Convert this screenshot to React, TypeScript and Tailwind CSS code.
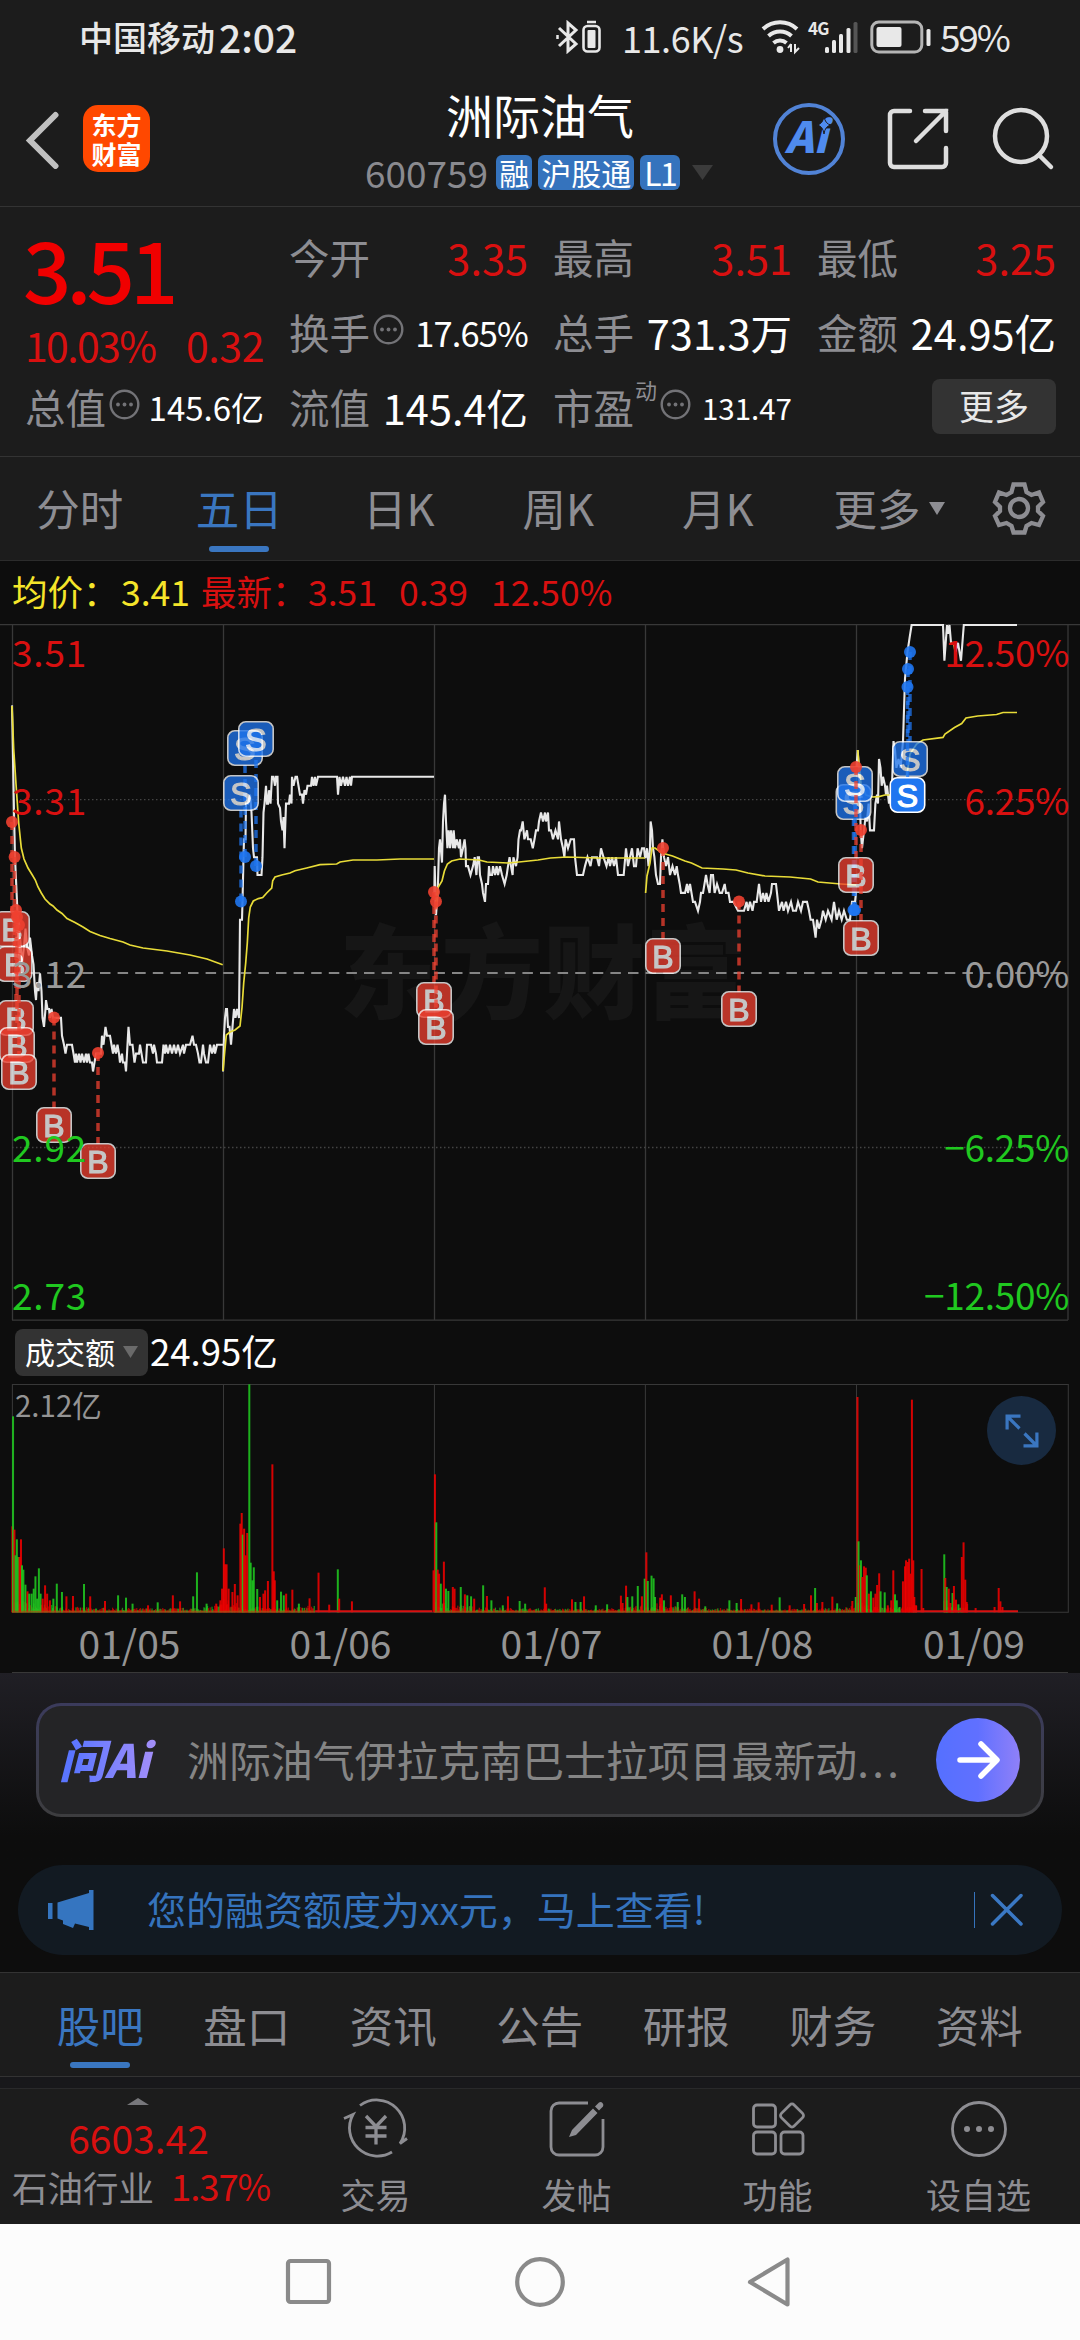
import { useMemo } from "react";
import clsx from "clsx";

const UP = "#f00000";
const DOWN = "#20c820";

// one tick is 0.01, counted down from the top of the scale (3.51)
const TICK = 8.93;

const priceSeries = [
  "12,9 13,15 14,21 15,26 17,31 18,34 19,37 20,35 22,38 24,36 25.5,34 27,36 29,37 30,35 32,37 33.5,38 35,41 36,42 37,40 38.5,41 40,39 41.5,41 42.5,44 44,45 45.5,43 46,42 47.5,43 49,43 50,44 51.5,43 53,44 61,44 62,46 64,47 65.5,48 67,47 72,47 73.5,48 75,49 76,48 77,49 79,48 80.5,49 82,48 84,49 86,48 87,49 88.5,48 90,49 92,49 93,50 94.5,49 96,48 101,48 102,46 103.5,47 105.5,45 107,46 110,46 111.5,47 113,48 114,47 116,48 117.5,47 119,48 120,49 122,48 123,49 125,49 126,50 127,48 128.5,45 130,47 132.5,47 134.5,49 136,48 139,48 140,47 141.5,48 143,49 146,49 147,47 151,47 153,48 154,47 156,48 157,49 162,49 163.5,47 165,48 166,47 168,48 170,47 172,48 174,47 176,48 178,47 180,48 183,47 184,48 186,47 190,47 192.5,46 194,47 196,47 198,48 199.5,49 201,49 203,47 204,48 206,49 208,49 210,47 212,48 214,47 215,48 217,47 223,47",
  "223,50 224,46 225,44 226,43 227,43 228,45 229.5,45 231,47 232.5,45 234,43 235.5,44 237,43 239,44 240,33 242,33 242.5,31 243.5,26 244,24 245.5,24 246,20 248,20 250,19 251.5,21 253,25 254,26 257,26 257.5,28 261.5,28 262.5,26 263.5,21 264.5,20 266,18 267,20 268,20 269,18.5 270.5,20 272,17 273.5,17 275,18 276,17 277.5,17 278,20 280,20.5 281,22 282.5,23 283.5,21.5 284.5,25 286,20 289,20 290,19 291.5,20 292,17 293.5,18 295.5,17 297,17 298.5,18 300,19 302,19 303,20 304.5,18.5 306,19 307.5,18 311,18 312,17 313.5,18 315,17 316,18 318,17 337,17 338,19 339.5,17 341,18 343,17 345,18 346.5,17 348,18 350,17 351,18 352,17 434,17",
  "434.3,30 434.7,27 436,32.5 437.7,30 439,25 440,24 442,26.6 443,22 444,20 445,19 446,22 447.4,25 448.6,23 450,25 451,23 453,25 453.7,23 455,25 456.6,24 459,25 460,24 461,26 463,25 464.6,24 465.5,25 466,27 468,27 470.5,28 473,27 474.7,26 476.4,28 477.7,26 479,26 480,28 482,29 483,30 485,31 486,29 488,29 489,27 490,28 492,28 493,27 495,28 496.6,27 498,28 500,27 502,28 504.6,29 506.7,28 508,27 509.6,26 511,27 512.6,28 513.4,26 516,27 517.6,26 518.5,24 520,23 521,23 522.7,22 524.4,24 527,23 528,24 530.7,24 532.8,25 534.5,24 536,23 538,23 539,22 541,21 543,22 545,21 546,22 548,21 549,23 551,23 553,24 555.5,23 558,24 559,22 561,24 563,25 564.4,26 565.6,24 568,25 570.7,24 574,24 575,26 577,28 583,28 585,27 587.5,26 590.5,27 592,26 597,26 599,27 601,25 603.5,26 606.5,27 608.6,26 610,27 612,26 614,27 616,26 618,28 623.7,28 626,25 628,27 630,26 632,25 634,27 636,27 637.6,25 640,26 642,25 644,25 645,26 645.6,26 647,25 648.5,27 650,25 650.6,22 652,23 653,25 654.4,26 656,28 658,29 660,29 661,26 662.4,24 664,26 666,27 668,26 670,28 672.5,27 675,28 676.7,27 678,28 679.7,29 681,30 685,30 687,29 688,30 690,29 691.5,30 693,31 695,31 698,32 700,31 701,30 703,30 704.5,29 706,28 707.5,29 709.6,30 711,28 713,28 714.6,30 717,29 719.7,30 722,30 724.7,29 726,30 728.5,30 730,31 733.6,31 735.7,31.5 738,32 744,32 746.6,31 748,32 750,31 752.5,32 754,31 756.7,31 759,29 761,31 763,30 765,31 766.4,30 768.5,31 771,30 772,29 776,29 777,30 779,32 782,31 783.6,32 786,31 788,32 791,31 793,32 796,32 798,31 801,32 803,31 807,31 809,32 810.6,33 813,33 815.6,35 817,33 819,34 821.5,33 823,32 825.7,33 828,32 831.6,33 834,31 836.7,33 839,32 841.7,33 844,32 846.8,33 850,33 852,31 855,31 856,30",
  "856.5,16 857.7,14 859.4,17 860.7,23 862,25 864,23 865.5,21.5 867,22 868.6,20 870,23 874,23 875.4,20 877,19 878,20 879,15 880.5,16 881.7,18 883,17 885,18 886,19 887,18 889,20 890,19 891.4,20 893.5,13 895,14 896.4,16 898.5,15 900.6,16 903,13 905,6 907.5,3 909.5,1.5 911.6,0 943,0 944.4,4 945.7,2 947,0 948,1 949.5,0 951,2 953.7,2 955.4,3 958,2 961,4 963.8,0 1017,0",
];

const averageSeries = [
  "12,81 13.7,124 16,159 18.7,198 21.3,223 24,234 28,243 32.3,250 35.3,255 38,262 41.3,268 45,274 50,279 53,281 57,285 62,288.5 67,293.5 75,297.5 83,302 90,306.5 100,310.5 110,313.5 123,317 130,320 143,323 167,326 190,330 207,334 222.7,339.7",
  "223,446 224.7,427 226.3,410 230,407 235,405 240,401 242,382.5 243.7,358 245.7,338 247.3,318 248.7,293 250.3,282 253.3,276 258.3,273.6 262.7,272.6 266.7,268 271.7,263 272.7,255.7 275,252 281.7,250 290,248 295,245.7 306.7,243 320,239.7 336.7,239 340,237 353,235 377,235 400,234 434,234",
  "436,283 437.7,263 442,256 444.4,246 447.4,239 451.6,236 460,234 479,235 487,237 508,238 519,237 538,235 550.5,233 567,232 597,233 645,233",
  "645.6,268 647,251 650,238 652,223 655,223 662,228 672.5,231 685,236 691.5,238 702,243 723,244 736,245 748,248 765,251 790,252 810.6,254 818,257 841,259 856,260",
  "857.7,125 859,139 861,159 866,170 872.5,172 879,171.6 885,170 891,170 903,164 907,149 910,129 916.6,119 923,115 943,112.4 945,109 954.5,102.5 961.7,98.5 966,93 977.7,91 996.6,89.5 1003,87.5 1017,87.5",
];

type Trade = {
  side: "B" | "S";
  x: number;
  dot: number;
  badge: number;
  merged?: boolean;
  active?: boolean;
};

const trades: Trade[] = [
  { side: "B", x: 12, dot: 197, badge: 304 },
  { side: "B", x: 14.6, dot: 232, badge: 339 },
  { side: "B", x: 16, dot: 285, badge: 393 },
  { side: "B", x: 17, dot: 292, badge: 420 },
  { side: "B", x: 19, dot: 300, badge: 447 },
  { side: "B", x: 54, dot: 392.5, badge: 500 },
  { side: "B", x: 98, dot: 428, badge: 536 },
  { side: "S", x: 245, dot: 232, badge: 123 },
  { side: "S", x: 256, dot: 241, badge: 114 },
  { side: "S", x: 241, dot: 276.5, badge: 168 },
  { side: "B", x: 434, dot: 267, badge: 375 },
  { side: "B", x: 436, dot: 276.5, badge: 402 },
  { side: "B", x: 663, dot: 223, badge: 331 },
  { side: "B", x: 739, dot: 276.5, badge: 384 },
  { side: "S", x: 853.5, dot: 285, badge: 177 },
  { side: "S", x: 855, dot: 285, badge: 159 },
  { side: "B", x: 856, dot: 142, badge: 250 },
  { side: "B", x: 861, dot: 205, badge: 313 },
  { side: "S", x: 908, dot: 44, badge: 134, merged: true },
  { side: "S", x: 910, dot: 27, badge: 134 },
  { side: "S", x: 907.5, dot: 62, badge: 170, active: true },
];

// x, height, r = bought / g = sold
const volumes =
  "36,258,r 38,588,g 42,248,r 45,171,g 49,219,g 53,166,g 57,166,r 61,219,r 64,141,g 68,128,g 74,83,g 80,63,r 85,56,g 92,56,g 98,71,g 103,108,g 108,41,g 113,132,g 118,56,g 124,41,r 131,81,r 137,56,r 145,36,r 155,41,g 165,86,g 180,61,g 193,48,r 212,49,r 244,85,g 262,48,r 305,34,r 343,51,g 366,44,g 385,26,g 430,21,r 458,30,g 502,51,r 523,33,r 561,48,g 572,120,g 600,26,g 628,26,r 640,36,r " +
  "645,71,r 650,192,r 654,144,r 658,144,r 664,71,r 675,61,r 682,85,r 690,51,r 698,266,r 702,298,r 705,233,g 709,251,r 713,171,r 718,238,r 724,684,g 728,149,g 733,96,g 737,135,g 747,70,g 755,46,r 765,56,r 770,66,r 778,94,r 791,444,r 795,123,r 798,96,r 805,36,g 816,62,g 824,51,g 831,56,r 849,68,r 868,26,g 899,42,r 925,119,r 956,23,r 981,129,g 985,41,r 1022,33,r " +
  "1259,126,r 1263,414,r 1267,270,g 1271,128,r 1275,116,r 1280,86,g 1289,152,r 1295,71,g 1302,64,g 1315,76,r 1320,71,r 1338,76,g 1350,54,r 1357,51,g 1368,48,g 1377,41,r 1403,81,g 1414,49,r 1427,36,g 1460,21,g 1475,48,r 1509,34,g 1525,26,g 1582,75,r 1586,26,r 1661,39,r 1671,31,g 1686,31,g 1696,48,r 1730,21,g 1763,24,g 1803,50,r 1808,28,r 1818,80,r 1822,46,g 1836,48,g 1852,79,g 1864,48,r " +
  "1872,101,g 1877,180,r 1881,94,g 1892,110,g 1898,102,g 1902,46,g 1917,44,r 1922,54,r 1928,36,g 1948,51,r 1968,31,g 1981,54,g 1989,46,g 2017,63,r 2030,41,r 2048,18,g 2118,36,g 2139,28,g 2152,40,r 2182,24,r 2203,30,r 2241,23,r 2264,45,g 2293,21,r 2335,25,r 2355,51,r 2367,73,g 2372,28,r 2388,31,r 2417,47,r 2431,27,g 2475,34,r " +
  "2485,46,g 2490,646,r 2493,213,g 2497,141,r 2500,156,g 2504,106,r 2509,138,r 2514,134,r 2517,111,g 2523,56,r 2529,63,g 2536,44,r 2542,56,r 2547,82,r 2553,117,r 2557,63,g 2569,60,g 2578,21,r 2588,36,r 2594,126,r 2599,54,g 2604,36,g 2612,16,g 2622,93,r 2628,138,r 2631,156,r 2636,151,r 2640,161,r 2644,116,r 2648,638,r 2652,156,r 2655,46,r 2660,21,r 2676,130,r 2681,13,r 2742,174,g 2745,103,r 2749,76,g 2755,71,r 2760,28,r 2766,58,g 2770,79,r 2776,38,r 2783,24,g 2793,166,r 2798,210,r 2803,98,r 2807,31,r 2833,13,r 2888,16,r 2900,73,r 2905,33,r 2911,16,r";

const toPoints = (series: string, scale: number) =>
  series
    .split(" ")
    .map((pair) => {
      const [x, y] = pair.split(",").map(Number);
      return `${x},${y * scale}`;
    })
    .join(" ");

// quiet minutes between the large orders
function minorVolumes() {
  const ranges = [
    [36, 646, 22],
    [650, 915, 26],
    [1262, 1870, 18],
    [1874, 2484, 16],
    [2490, 2662, 26],
    [2742, 2812, 30],
  ];
  const bars: { x: number; h: number; up: boolean }[] = [];
  let seed = 7;
  const next = () => {
    seed = (seed * 16807) % 2147483647;
    return seed / 2147483647;
  };
  for (const [from, to, peak] of ranges) {
    for (let x = from; x < to; x += 2.6) {
      const p = (x - from) / (to - from);
      const envelope = 0.35 + 1.6 * Math.exp(-p * 7) + 0.8 * Math.exp(-(1 - p) * 14);
      bars.push({ x, h: 5 + peak * envelope * next() ** 1.6, up: next() > 0.4 });
    }
  }
  return bars;
}

function MoreInfo() {
  return (
    <svg className="mb-[6px] ml-[3px] h-[31px] w-[31px] shrink-0" viewBox="0 0 31 31" fill="none">
      <circle cx="15.5" cy="15.5" r="13.8" stroke="#737377" strokeWidth="2.4" />
      <circle cx="9" cy="15.5" r="1.9" fill="#737377" />
      <circle cx="15.5" cy="15.5" r="1.9" fill="#737377" />
      <circle cx="22" cy="15.5" r="1.9" fill="#737377" />
    </svg>
  );
}

function StatusBar() {
  return (
    <div className="flex h-[75px] items-center pb-[2px] pl-[79px] text-[#e8e8e8]">
      <span className="w-[140px] text-[34px] font-medium leading-none">中国移动</span>
      <span className="w-[337px] text-[39px] font-medium leading-none">2:02</span>
      <svg className="h-[34px] w-[46px]" viewBox="0 0 46 34" fill="none" stroke="#e8e8e8" strokeWidth="3">
        <path d="M3 8l17 16-8 7V3l8 7L3 26" />
        <path d="M1.500 15v4" strokeWidth="2.500" />
        <rect x="27.500" y="6" width="16" height="25.500" rx="4" strokeWidth="2.600" />
        <rect x="31.500" y="10" width="8" height="18" rx="1" fill="#e8e8e8" stroke="none" />
        <path d="M31 2h9" strokeWidth="2.500" />
      </svg>
      <span className="ml-[20px] w-[139px] text-[36px] leading-none tracking-[-0.012em]">11.6K/s</span>
      <svg className="h-[36px] w-[40px]" viewBox="0 0 40 36" fill="none" stroke="#e8e8e8" strokeWidth="4">
        <path d="M2 10a25 25 0 0 1 34 0M7.500 17a17 17 0 0 1 23 0M12.500 24a10 10 0 0 1 13 0" />
        <circle cx="19" cy="30.500" r="3.400" fill="#e8e8e8" stroke="none" />
        <path d="M30 25v8M27 29l3-4M34 25v8l4-4" strokeWidth="2" />
      </svg>
      <span className="mb-[18px] ml-[7px] w-[16px] text-[17px] font-bold leading-none tracking-tighter">4G</span>
      <svg className="h-[32px] w-[34px]" viewBox="0 0 34 32" fill="#e8e8e8">
        <rect x="1" y="26" width="4" height="6" rx="1.500" />
        <rect x="8" y="19" width="4" height="13" rx="1.500" />
        <rect x="15" y="13" width="4" height="19" rx="1.500" />
        <rect x="22.500" y="7" width="4" height="25" rx="1.500" />
        <rect x="29.500" y="1" width="4" height="31" rx="1.500" fill="#555" />
      </svg>
      <svg className="ml-[12px] h-[34px] w-[62px]" viewBox="0 0 62 34" fill="none">
        <rect x="1.800" y="2" width="50" height="30" rx="7" stroke="#b5b5b5" strokeWidth="3" />
        <rect x="6.500" y="7" width="25" height="20" rx="2" fill="#e8e8e8" />
        <rect x="56.500" y="9" width="4" height="17" rx="1.500" fill="#e8e8e8" />
      </svg>
      <span className="ml-[8px] text-[37px] leading-none tracking-[-0.06em]">59%</span>
    </div>
  );
}

function Header() {
  return (
    <header className="flex h-[132px] items-start border-b border-[#333] pt-[9px]">
      <div className="flex w-[339px] items-center pl-[25px] pt-[21px]">
        <svg className="h-[60px] w-[36px]" viewBox="0 0 36 60" fill="none" stroke="#c0c0c0" strokeWidth="6" strokeLinecap="round">
          <path d="M30.500 6L5 31.500L30.500 57" />
        </svg>
        <div className="ml-[22px] flex h-[67px] w-[67px] flex-col items-center justify-center rounded-[15px] bg-[#ff4800] text-[25px] font-bold leading-[29px] text-white">
          <span>东方</span>
          <span>财富</span>
        </div>
      </div>
      <div className="flex w-[400px] flex-col items-center">
        <h1 className="pb-[17px] pl-[2px] pt-[6px] text-[47px] leading-none text-white">洲际油气</h1>
        <div className="flex items-center gap-[6px] text-[30px] leading-none text-white">
          <span className="mr-[2px] text-[37px] text-[#8a8a8f]">600759</span>
          <span className="flex h-[35px] items-center rounded-[6px] bg-[#3573bd] px-[3px] pb-[2px]">融</span>
          <span className="flex h-[35px] items-center rounded-[6px] bg-[#3573bd] px-[3px] pb-[2px]">沪股通</span>
          <span className="flex h-[35px] items-center rounded-[6px] bg-[#3573bd] px-[4px] pb-[2px] text-[32px] tracking-[-0.05em]">L1</span>
          <svg className="ml-[6px] h-[15px] w-[21px]" viewBox="0 0 21 15" fill="#3b3b3b">
            <path d="M0 0h21L10.500 15z" />
          </svg>
        </div>
      </div>
      <div className="flex items-center pl-[32px] pt-[17px]">
        <svg className="h-[76px] w-[76px]" viewBox="0 0 76 76" fill="none">
          <circle cx="38" cy="38" r="34" stroke="#5183d6" strokeWidth="4" />
          <text x="14" y="52" fontSize="43" fontWeight="900" fontStyle="italic" fill="#4f8bee">Ai</text>
          <path d="M53 15q1 8 7 9q-6 1-7 9q-1-8-7-9q6-1 7-9z" fill="#4f8bee" stroke="#1c1c1c" strokeWidth="1" />
        </svg>
        <svg className="ml-[39px] h-[64px] w-[64px]" viewBox="0 0 64 64" fill="none" stroke="#dedede" strokeWidth="4.500" strokeLinecap="round">
          <path d="M24 4H8a4 4 0 0 0-4 4v48a4 4 0 0 0 4 4h48a4 4 0 0 0 4-4V41M39 4h21v20M60 4L30 34" />
        </svg>
        <svg className="ml-[41px] h-[66px] w-[66px]" viewBox="0 0 66 66" fill="none" stroke="#dedede" strokeWidth="4.500" strokeLinecap="round">
          <circle cx="30" cy="30" r="26" />
          <path d="M48 49L60 61" />
        </svg>
      </div>
    </header>
  );
}

function QuoteItem({ label, value, info, sup, tone, size }: {
  label: string;
  value: string;
  info?: boolean;
  sup?: string;
  tone?: string;
  size?: string;
}) {
  return (
    <div className="flex h-[75px] items-center">
      <span className="text-[40.500px] leading-none text-[#8d8d92]">{label}</span>
      {sup && <span className="mb-[38px] ml-[1px] text-[22px] leading-none text-[#8d8d92]">{sup}</span>}
      {info && <MoreInfo />}
      <span className={clsx("ml-auto whitespace-nowrap leading-none", tone ?? "text-white", size ?? "text-[41.500px]")}>
        {value}
      </span>
    </div>
  );
}

function Quote() {
  return (
    <section className="grid h-[250px] grid-cols-[239px_239px_239px_239px] gap-x-[25px] border-b border-[#333] pl-[25px] pt-[13px]">
      <div>
        <div className="-ml-[2px] flex h-[96px] items-center pb-[4px] text-[85px] font-medium leading-none tracking-[-0.06em] text-[#f00000]">
          3.51
        </div>
        <div className="flex h-[54px] items-center justify-between pt-[2px] text-[41px] leading-none text-[#d81010]">
          <span className="tracking-[-0.04em]">10.03%</span>
          <span className="tracking-[-0.01em]">0.32</span>
        </div>
        <QuoteItem label="总值" value="145.6亿" info size="text-[33px]" />
      </div>
      <div>
        <QuoteItem label="今开" value="3.35" tone="text-[#d81010]" />
        <QuoteItem label="换手" value="17.65%" info size="text-[34.500px] tracking-[-0.025em]" />
        <QuoteItem label="流值" value="145.4亿" />
      </div>
      <div>
        <QuoteItem label="最高" value="3.51" tone="text-[#d81010]" />
        <QuoteItem label="总手" value="731.3万" />
        <QuoteItem label="市盈" value="131.47" sup="动" info size="text-[29.500px]" />
      </div>
      <div>
        <QuoteItem label="最低" value="3.25" tone="text-[#d81010]" />
        <QuoteItem label="金额" value="24.95亿" />
        <div className="flex h-[72px] items-center justify-end">
          <button type="button" className="h-[55px] w-[124px] rounded-[8px] bg-[#333] pb-[4px] text-[35px] leading-none text-[#e8e8e8]">
            更多
          </button>
        </div>
      </div>
    </section>
  );
}

function PeriodTabs() {
  const periods = ["分时", "五日", "日K", "周K", "月K"];
  return (
    <nav className="flex h-[104px] border-b border-[#2c2c2c] text-[43.500px] leading-none text-[#8d8d92]">
      {periods.map((period) => (
        <div key={period} className={clsx("flex w-[159.500px] flex-col items-center pt-[29px]", period === "五日" && "text-[#3a76c0]")}>
          <span>{period}</span>
          {period === "五日" && <span className="mt-[16px] h-[6px] w-[60px] rounded-full bg-[#3a76c0]" />}
        </div>
      ))}
      <div className="flex items-start pl-[36px] pt-[29px]">
        更多
        <svg className="ml-[8px] mt-[16px] h-[13px] w-[16px]" viewBox="0 0 16 13" fill="#8d8d92">
          <path d="M0 0h16L8 13z" />
        </svg>
      </div>
      <svg className="ml-[47px] mt-[24px] h-[54px] w-[54px]" viewBox="0 0 54 54" fill="none" stroke="#8d8d92" strokeWidth="4.300">
        <path d="M21.500 3.500h11l2 7.500 5 3 7.500-2.500 4 9.500-5 5v4l5 5-4 9-7.500-2-5 3-2 6.500h-11l-2-6.500-5-3-7.500 2-4-9 5-5v-4l-5-5 4-9.500 7.500 2.500 5-3z" />
        <circle cx="27" cy="27" r="9" />
      </svg>
    </nav>
  );
}

function TradeMark({ side, x, dot, badge, merged, active }: Trade) {
  const color = side === "B" ? "#ee4030" : "#1f76f0";
  return (
    <g>
      <path d={`M${x} ${dot}V${badge > dot ? badge - 17 : badge + 17}`} stroke={color} strokeOpacity=".75" strokeWidth="3.500" strokeDasharray="8 6" />
      <circle cx={x} cy={dot} r="6" fill={color} fillOpacity=".9" />
      {!merged && (
        <g opacity={active ? 1 : 0.76}>
          <rect x={x - 17.2} y={badge - 17.2} width="34.400" height="34.400" rx="7" fill={color} stroke="#fff" strokeWidth="1.600" />
          <text x={x} y={badge + 11.5} textAnchor="middle" fontSize="32" stroke="#fff" strokeWidth="1.200" fill="#fff" className="font-['Liberation_Sans',sans-serif]">
            {side}
          </text>
        </g>
      )}
    </g>
  );
}

function PriceChart() {
  const dayLines = [12.5, 223.5, 434.5, 645.5, 856.5, 1068];
  const leftLabels = [
    { y: 42, text: "3.51", fill: "#d81010" },
    { y: 190, text: "3.31", fill: "#d81010" },
    { y: 363, text: "3.12", fill: "#9a9a9a" },
    { y: 537, text: "2.92", fill: DOWN },
    { y: 685, text: "2.73", fill: DOWN },
  ];
  const rightLabels = ["12.50%", "6.25%", "0.00%", "−6.25%", "−12.50%"];

  return (
    <svg className="block h-[697px] w-[1080px] overflow-visible" viewBox="0 -1 1080 697" fill="none">
      <text x="543" y="386" textAnchor="middle" fontSize="102" fontWeight="900" fill="#161616">东方财富</text>
      <g stroke="#383838" strokeWidth="1.300">
        <path d="M0 -.4H1080M12 695.200H1068" />
        {dayLines.map((x) => (
          <path key={x} d={`M${x} 0V695`} />
        ))}
        <path d="M12 174.700H1068M12 522.500H1068" strokeDasharray="1.500 2.500" stroke="#444" />
      </g>
      <path d="M12 348H1062" stroke="#858585" strokeWidth="1.800" strokeDasharray="10.500 7.100" />
      {priceSeries.map((series) => (
        <polyline key={series} points={toPoints(series, TICK)} stroke="#e8e8e8" strokeWidth="2.100" />
      ))}
      {averageSeries.map((series) => (
        <polyline key={series} points={toPoints(series, 1)} stroke="#e8dc38" strokeWidth="1.700" />
      ))}
      {trades.map((trade, i) => (
        <TradeMark key={i} {...trade} />
      ))}
      <g fontSize="37">
        {leftLabels.map((label, i) => (
          <g key={label.text} fill={label.fill}>
            <text x="12" y={label.y} letterSpacing=".8">{label.text}</text>
            <text x="1069" y={label.y} textAnchor="end" letterSpacing="-.3">{rightLabels[i]}</text>
          </g>
        ))}
      </g>
    </svg>
  );
}

function VolumeChart() {
  const minor = useMemo(minorVolumes, []);
  const days = ["01/05", "01/06", "01/07", "01/08", "01/09"];

  return (
    <section className="relative">
      <div className="flex h-[63px] items-center pl-[15px] text-white">
        <div className="flex h-[47px] w-[133px] items-center rounded-[8px] bg-[#333] pb-[3px] pl-[10px] text-[30px] leading-none">
          成交额
          <svg className="ml-[8px] mt-[2px] h-[12px] w-[15px]" viewBox="0 0 15 12" fill="#6a6a6a">
            <path d="M0 0h15L7.500 12z" />
          </svg>
        </div>
        <span className="ml-[2px] pb-[3px] text-[36.500px] leading-none">24.95亿</span>
      </div>
      <svg className="block h-[229px] w-[1080px]" viewBox="0 0 3136 687" preserveAspectRatio="none">
        <g stroke="#383838" strokeWidth="3">
          <path d="M36 1.500H3102M36 684.500H3102" />
          {[36, 649, 1261.5, 1874, 2487, 3102].map((x) => (
            <path key={x} d={`M${x} 0V686`} />
          ))}
        </g>
        {minor.map((bar, i) => (
          <rect key={i} x={bar.x - 2} y={685 - bar.h} width="3.600" height={bar.h} fill={bar.up ? UP : DOWN} opacity=".7" />
        ))}
        {volumes.split(" ").map((item) => {
          const [x, h, side] = item.split(",");
          return (
            <rect key={x} x={Number(x) - 3} y={685 - Number(h)} width="5.800" height={h} fill={side === "r" ? UP : DOWN} opacity=".88" />
          );
        })}
        <path d="M36 683H915M1262 683H2490" stroke="#a85010" strokeWidth="5" opacity=".7" />
        <path d="M915 682H1255M2650 682H2956" stroke="#d81010" strokeWidth="6" />
      </svg>
      <div className="mx-[12px] grid h-[60px] grid-cols-[211px_211px_211px_211px_212px] items-center border-b border-[#383838] text-center text-[39px] leading-none text-[#949494]">
        {days.map((day) => (
          <span key={day} className="pb-[1px] pl-[24px]">{day}</span>
        ))}
      </div>
      <span className="absolute left-[15px] top-[69px] text-[29.500px] leading-none text-[#949494]">2.12亿</span>
      <button type="button" className="absolute left-[987px] top-[75px] flex h-[69px] w-[69px] items-center justify-center rounded-full bg-[#182a40]">
        <svg className="h-[34px] w-[34px]" viewBox="0 0 34 34" fill="none" stroke="#3a76c0" strokeWidth="3.200">
          <path d="M15.500 2.100H2.100V15.500M2.500 2.500L14.500 14.500M18.500 31.900H31.900V18.500M31.500 31.500L19.500 19.500" />
        </svg>
      </button>
    </section>
  );
}

function AskAi() {
  return (
    <section className="h-[192px] bg-linear-to-b from-[#201f25] to-[#0d0d0d] to-85% px-[36px] pt-[30px]">
      <div className="h-[114px] rounded-[25px] bg-linear-to-b from-[#3b3b5c] to-[#3d3d3f] p-[3px]">
        <div className="flex h-[108px] items-center rounded-[22px] bg-[#242426] pl-[20px]">
          <span className="w-[128px] bg-linear-to-r from-[#5a75ff] from-10% to-[#a890f8] to-80% bg-clip-text pb-[5px] text-[46px] font-black italic leading-[60px] text-transparent">
            问Ai
          </span>
          <span className="w-[721px] whitespace-nowrap pb-[3px] text-[41.900px] leading-none text-[#858585]">
            洲际油气伊拉克南巴士拉项目最新动<span className="tracking-[0.08em]">...</span>
          </span>
          <div className="ml-[28px] flex h-[84px] w-[84px] items-center justify-center rounded-full bg-linear-to-r from-[#5570ff] via-[#6070ff] to-[#8f80f8]">
            <svg className="h-[42px] w-[44px]" viewBox="0 0 44 42" fill="none" stroke="#fff" strokeWidth="5.500" strokeLinecap="round" strokeLinejoin="round">
              <path d="M4 21h35M25 5l16 16-16 16" />
            </svg>
          </div>
        </div>
      </div>
    </section>
  );
}

function Notice() {
  return (
    <div className="h-[107px] bg-[#0d0d0d] px-[18px]">
      <div className="flex h-[90px] items-center rounded-full bg-[#121a22] pl-[30px] text-[#3573bd]">
        <svg className="h-[40px] w-[46px]" viewBox="0 0 46 40" fill="#3575c0">
          <path d="M0 13h4.500v16H0zM9.500 12.500L41 3V0h4.500v40H41v-3L27 33.500 25 38l-10-4v-3.500l-5.500-2z" />
        </svg>
        <span className="ml-[53px] pb-[4px] text-[39px] leading-none">您的融资额度为xx元，马上查看!</span>
        <div className="ml-auto h-[36px] w-[1.500px] bg-[#3573bd]" />
        <svg className="ml-[15px] mr-[38px] h-[34px] w-[34px]" viewBox="0 0 34 34" stroke="#3a78c4" strokeWidth="3.500" strokeLinecap="round">
          <path d="M2.500 2.500L31 31M31 2.500L2.500 31" />
        </svg>
      </div>
    </div>
  );
}

function SectionTabs() {
  const tabs = ["股吧", "盘口", "资讯", "公告", "研报", "财务", "资料"];
  return (
    <nav className="flex h-[105px] border-y border-[#333] bg-[#1c1c1c] pl-[27px] text-[43.500px] leading-none text-[#8d8d92]">
      {tabs.map((tab, i) => (
        <div key={tab} className={clsx("flex w-[146.500px] flex-col items-center pt-[30px]", i === 0 && "text-[#3a76c0]")}>
          <span>{tab}</span>
          {i === 0 && <span className="mt-[15px] h-[6px] w-[60px] rounded-full bg-[#3a76c0]" />}
        </div>
      ))}
    </nav>
  );
}

function BottomNav() {
  return (
    <nav className="flex h-[136px] border-t border-[#29292b] bg-[#1c1c1c] text-[35px] leading-none text-[#8d8d92]">
      <div className="flex w-[275px] flex-col items-center pt-[9px]">
        <svg className="h-[7px] w-[22px]" viewBox="0 0 22 7" fill="#77777b">
          <path d="M0 7h22L11 0z" />
        </svg>
        <span className="mt-[13px] pl-[2px] text-[39px] text-[#d81010]">6603.42</span>
        <div className="mt-[11px] flex w-full items-center pl-[12px]">
          <span className="text-[35.500px]">石油行业</span>
          <span className="ml-[17px] text-[36.500px] tracking-[-0.03em] text-[#d81010]">1.37%</span>
        </div>
      </div>
      <div className="flex w-[201px] flex-col items-center gap-[15px] pt-[8px]">
        <svg className="h-[64px] w-[66px]" viewBox="0 0 66 64" fill="none" stroke="#8d8d92" strokeWidth="2.800">
          <path d="M17 8.500A28 28 0 0 1 57 46.500l7-5M49 55A28 28 0 0 1 10 17.500L1 21.500" />
          <path d="M23 19l10 10.500L43 19M33 29.500V47.500M22.500 30.500h21M22.500 39h21" strokeWidth="3.300" />
        </svg>
        <span>交易</span>
      </div>
      <div className="flex w-[201px] flex-col items-center gap-[15px] pt-[8px]">
        <svg className="h-[64px] w-[60px]" viewBox="0 0 60 64" fill="none" stroke="#8d8d92" strokeWidth="2.800">
          <path d="M41 6H12a8 8 0 0 0-8 8v36a8 8 0 0 0 8 8h36a8 8 0 0 0 8-8V22" />
          <path d="M22 40l3-7L46 11.500l4.500 4.500L29 38zM48 9.500l4-4q2-1 3.500.5t.5 3.500l-4 4z" fill="#8d8d92" stroke="none" />
        </svg>
        <span>发帖</span>
      </div>
      <div className="flex w-[201px] flex-col items-center gap-[15px] pt-[8px]">
        <svg className="h-[64px] w-[60px]" viewBox="0 0 60 64" fill="none" stroke="#8d8d92" strokeWidth="2.800">
          <rect x="5.500" y="8" width="22" height="22" rx="3.500" />
          <rect x="5.500" y="35" width="22" height="22" rx="3.500" />
          <rect x="33" y="35" width="22" height="22" rx="3.500" />
          <rect x="35" y="9.500" width="18" height="18" rx="3" transform="rotate(45 44 18.500)" />
        </svg>
        <span>功能</span>
      </div>
      <div className="flex w-[201px] flex-col items-center gap-[15px] pt-[8px]">
        <svg className="h-[64px] w-[60px]" viewBox="0 0 60 64" fill="none">
          <circle cx="30" cy="32" r="26.500" stroke="#8d8d92" strokeWidth="2.800" />
          <g fill="#8d8d92">
            <circle cx="18" cy="32" r="3" />
            <circle cx="30" cy="32" r="3" />
            <circle cx="42" cy="32" r="3" />
          </g>
        </svg>
        <span>设自选</span>
      </div>
    </nav>
  );
}

function SystemNav() {
  return (
    <div className="flex h-[116px] items-center justify-center gap-[181px] bg-[#fcfcfc]">
      <svg className="h-[50px] w-[50px]" viewBox="0 0 50 50" fill="none" stroke="#8a8a8a" strokeWidth="4.200">
        <rect x="4" y="4" width="41" height="41" rx="2.500" />
      </svg>
      <svg className="h-[50px] w-[50px]" viewBox="0 0 50 50" fill="none" stroke="#8a8a8a" strokeWidth="4.200">
        <circle cx="25" cy="25" r="22.800" />
      </svg>
      <svg className="h-[50px] w-[50px]" viewBox="0 0 50 50" fill="none" stroke="#8a8a8a" strokeWidth="4.200" strokeLinejoin="round">
        <path d="M4 25L41.500 2.500V47.500z" />
      </svg>
    </div>
  );
}

export default function App() {
  return (
    <main className="h-[2340px] w-[1080px] overflow-hidden bg-[#0d0d0d] font-['Noto_Sans_CJK_SC',sans-serif]">
      <div className="bg-[#1c1c1c]">
        <StatusBar />
        <Header />
        <Quote />
        <PeriodTabs />
      </div>
      <div className="flex h-[63px] items-center whitespace-pre pb-[3px] pl-[12px] text-[35.500px] leading-none text-[#d81010]">
        <span className="w-[109px] text-[#f5e52a]">均价：</span>
        <span className="w-[80px] text-[#f5e52a]">3.41</span>
        <span className="w-[107px]">最新：</span>
        <span className="w-[91px]">3.51</span>
        <span className="w-[92px]">0.39</span>
        <span>12.50%</span>
      </div>
      <PriceChart />
      <VolumeChart />
      <AskAi />
      <Notice />
      <SectionTabs />
      <div className="h-[11px] bg-[#18181b]" />
      <BottomNav />
      <SystemNav />
    </main>
  );
}
